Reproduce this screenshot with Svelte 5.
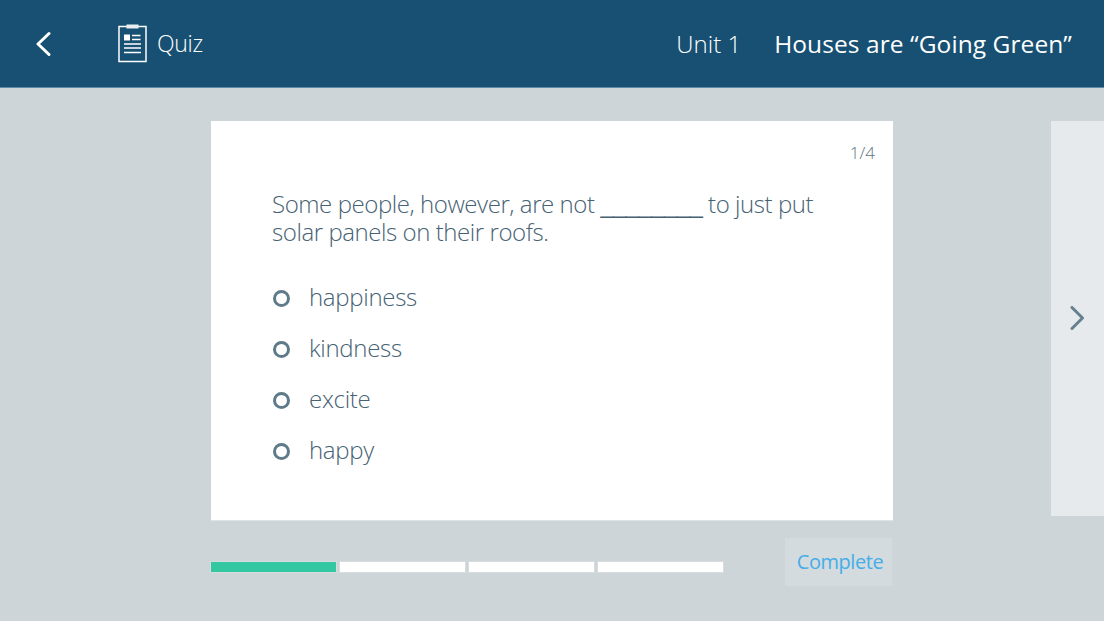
<script>
  let options = ["happiness", "kindness", "excite", "happy"];
  let steps = [true, false, false, false];
</script>

<div class="page">
  <header class="topbar">
    <button class="back" aria-label="Back">
      <svg width="16" height="26" viewBox="0 0 16 26" fill="none" stroke="#fff" stroke-width="3" stroke-linecap="round" stroke-linejoin="round">
        <path d="M14 2.5 3 13l11 10.500" />
      </svg>
    </button>
    <div class="section">
      <svg class="clipboard" width="30" height="39" viewBox="0 0 30 39" fill="none">
        <rect x="1" y="2.500" width="27" height="35" stroke="#fff" stroke-width="1.500" />
        <rect x="8.500" y="0.500" width="12" height="4" fill="#e8eef1" />
        <rect x="6" y="10.500" width="6" height="6" fill="#fff" />
        <path d="M14 11.500h8.500M14 15.500h8.500M6 20h17M6 24h17M6 28.500h17" stroke="#fff" stroke-width="1.500" />
      </svg>
      <span>Quiz</span>
    </div>
    <div class="titles">
      <span class="unit">Unit 1</span>
      <span class="lesson">Houses are “Going Green”</span>
    </div>
  </header>

  <main class="stage">
    <div class="column">
      <section class="card">
        <div class="count">1/4</div>
        <p class="question">Some people, however, are not <span class="blank">________</span> to just put<br />solar panels on their roofs.</p>
        <ul class="options">
          {#each options as option}
            <li><span class="radio"></span>{option}</li>
          {/each}
        </ul>
      </section>
      <div class="footer">
        <div class="progress">
          {#each steps as done}
            <span class="step" class:done></span>
          {/each}
        </div>
        <button class="complete">Complete</button>
      </div>
    </div>
    <aside class="next">
      <svg width="16" height="26" viewBox="0 0 16 26" fill="none" stroke="#65808f" stroke-width="3" stroke-linecap="round" stroke-linejoin="round">
        <path d="M2 1.500 12.500 12 2 22.500" />
      </svg>
    </aside>
  </main>
</div>

<style>
  :global(body) {
    margin: 0;
    background: #cdd5d8;
  }

  .page {
    height: 621px;
    overflow: hidden;
    font-family: "Open Sans", "Noto Sans", sans-serif;
    font-weight: 300;
  }

  .topbar {
    height: 88px;
    box-sizing: border-box;
    display: flex;
    align-items: center;
    background: #175072;
    border-bottom: 1px solid #5d8ba3;
    color: #fff;
  }

  .back {
    width: 35px;
    margin-left: 35px;
    padding: 0;
    background: none;
    border: none;
    display: flex;
  }

  .section {
    display: flex;
    align-items: center;
    gap: 9px;
    margin-left: 48px;
    font-size: 23px;
    letter-spacing: -0.3px;
    margin-top: -2px;
  }

  .clipboard {
    margin-top: 2px;
  }

  .titles {
    margin-left: auto;
    margin-right: 32px;
    display: flex;
    gap: 33px;
    font-size: 24px;
    margin-top: -1px;
  }

  .lesson {
    font-size: 24.5px;
    font-weight: 400;
    letter-spacing: 0.08px;
  }

  .stage {
    display: flex;
    padding-top: 33px;
  }

  .column {
    width: 682px;
    margin-left: 211px;
  }

  .card {
    height: 400px;
    box-sizing: border-box;
    padding: 22px 18px 0 61px;
    background: #fff;
    border-bottom: 1px solid #dfe4e6;
    color: #466273;
  }

  .count {
    text-align: right;
    font-size: 17px;
    line-height: 20px;
    color: #5e7380;
  }

  .question {
    margin: 27px 0 0;
    font-size: 24px;
    line-height: 28px;
    letter-spacing: -0.43px;
    white-space: nowrap;
  }

  .blank {
    font-family: "Liberation Sans", sans-serif;
    font-weight: 400;
    line-height: 0;
    letter-spacing: -0.62px;
  }

  .options {
    list-style: none;
    margin: 25px 0 0 1px;
    padding: 0;
  }

  .options li {
    display: flex;
    align-items: center;
    height: 51px;
    font-size: 24px;
    letter-spacing: -0.3px;
  }

  .radio {
    width: 11px;
    height: 11px;
    margin-top: 4px;
    margin-right: 19px;
    border: 3px solid #5f7a89;
    border-radius: 50%;
  }

  .footer {
    display: flex;
    align-items: center;
    justify-content: space-between;
    height: 48px;
    margin-top: 17px;
  }

  .progress {
    display: flex;
    gap: 4px;
    width: 512px;
    margin-top: 9px;
  }

  .step {
    flex: 1;
    height: 10px;
    background: #fff;
    box-shadow: 0 0 0 1px rgba(255, 255, 255, 0.2);
  }

  .step.done {
    background: #33c7a2;
  }

  .complete {
    width: 107px;
    height: 48px;
    margin-right: 1px;
    padding: 0 0 2px 3px;
    background: #d3dbde;
    border: none;
    color: #45aee8;
    font-family: inherit;
    font-weight: 400;
    font-size: 20px;
    letter-spacing: -0.45px;
  }

  .next {
    width: 53px;
    height: 395px;
    margin-left: 158px;
    background: #e6eaec;
    display: flex;
    align-items: center;
    justify-content: center;
  }
</style>
